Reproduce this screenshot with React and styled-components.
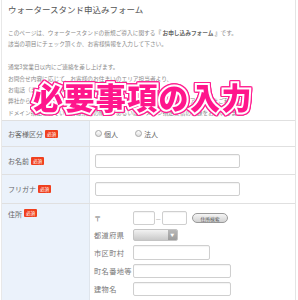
import React from 'react';
import styled, { createGlobalStyle } from 'styled-components';

const GlobalStyle = createGlobalStyle`
  html, body {
    margin: 0;
    padding: 0;
    background: #fff;
  }
  body {
    font-family: "Noto Sans CJK JP", "Noto Sans", sans-serif;
  }
`;

const Page = styled.div`
  position: relative;
  width: 298px;
  height: 300px;
  overflow: hidden;
  background: #fff;
`;

const Frame = styled.div`
  margin-left: 1px;
  width: 293px;
  height: 300px;
  border-left: 1px solid #e8e8e8;
  border-right: 1px solid #e4e4e4;
`;

const Title = styled.h1`
  margin: 0;
  padding: 4px 0 0 6px;
  font-size: 8.5px;
  line-height: 11px;
  font-weight: 400;
  color: #555;
`;

const Intro = styled.div`
  padding: 12px 0 0 6px;
  font-size: 5.7px;
  line-height: 11.4px;
  color: #8a8a8a;
  height: 93px;
  white-space: nowrap;
`;

const Line = styled.p`
  margin: 0;
  min-height: 11.4px;
`;

const Strong = styled.b`
  color: #666;
`;

const Table = styled.div`
  border-top: 1px solid #e0e0e0;
`;

const Row = styled.div`
  display: grid;
  grid-template-columns: 88px 1fr;
  height: ${p => p.$h}px;
  border-bottom: ${p => (p.$last ? 'none' : '1px solid #e0e0e0')};
`;

const Label = styled.div`
  display: flex;
  align-items: ${p => (p.$top ? 'flex-start' : 'center')};
  gap: 2px;
  padding: ${p => (p.$top ? '5px 0 0 6px' : '0 0 0 6px')};
  background: #ebf2fb;
  border-right: 1px solid #dfe5ec;
  font-size: 7px;
  color: #666;
`;

const Badge = styled.span`
  display: inline-flex;
  align-items: center;
  justify-content: center;
  width: 13px;
  height: 8px;
  background: #f0401e;
  color: #fff;
  font-size: 4.6px;
  border-radius: 1px;
`;

const Cell = styled.div`
  display: flex;
  align-items: ${p => (p.$top ? 'flex-start' : 'center')};
  padding: ${p => (p.$top ? '7px 0 0 4px' : '0 0 0 5px')};
`;

const Radios = styled.div`
  display: flex;
  align-items: center;
  gap: 17px;
  font-size: 7px;
  color: #666;
`;

const RadioItem = styled.label`
  display: flex;
  align-items: center;
  gap: 2px;
`;

const Radio = styled.span`
  width: 5px;
  height: 5px;
  border-radius: 50%;
  border: 1px solid #a8a8a8;
  background: linear-gradient(#fff, #ddd);
`;

const Input = styled.div`
  width: ${p => p.$w}px;
  height: ${p => p.$h || 14}px;
  box-sizing: border-box;
  border: 1px solid #cfcfcf;
  border-radius: 2px;
  background: #fff;
  box-shadow: inset 0 1px 1px rgba(0, 0, 0, 0.05);
`;

const Address = styled.div`
  display: grid;
  grid-template-columns: 39px auto;
  row-gap: 4px;
  align-items: center;
  font-size: 7.2px;
  color: #777;
  letter-spacing: 0.4px;
`;

const Postal = styled.div`
  display: flex;
  align-items: center;
`;

const Dash = styled.span`
  width: 7px;
  text-align: center;
  font-size: 6px;
  color: #999;
`;

const SearchButton = styled.span`
  margin-left: 5px;
  width: 36px;
  height: 10px;
  box-sizing: border-box;
  border: 1px solid #9a9a9a;
  border-radius: 5px;
  background: linear-gradient(#f6f6f6, #d2d2d2);
  font-size: 4.8px;
  letter-spacing: 0;
  color: #555;
  display: flex;
  align-items: center;
  justify-content: center;
`;

const Select = styled.div`
  display: flex;
  width: 45px;
  height: 12px;
  border-radius: 2px;
  overflow: hidden;
  background: linear-gradient(#f2f2f2, #c9c9c9);
  border: 1px solid #c4c4c4;
  box-sizing: border-box;
`;

const SelectArrow = styled.span`
  margin-left: auto;
  width: 9px;
  background: linear-gradient(#b8b8b8, #9c9c9c);
  display: flex;
  align-items: center;
  justify-content: center;
  color: #fff;
  font-size: 4px;
`;

const Overlay = styled.div`
  position: absolute;
  left: 33px;
  top: 79px;
  font-size: 30px;
  line-height: 34px;
  font-weight: 900;
  letter-spacing: 1.4px;
  color: #ff168c;
  -webkit-text-stroke: 4px #fff;
  paint-order: stroke fill;
  white-space: nowrap;
  filter: drop-shadow(1px 0 0 #ff1f90) drop-shadow(-1px 0 0 #ff1f90)
    drop-shadow(0 1px 0 #ff1f90) drop-shadow(0 -1px 0 #ff1f90);
`;

const Required = () => <Badge>必須</Badge>;

export default function App() {
  return (
    <Page>
      <GlobalStyle />
      <Frame>
        <Title>ウォータースタンド申込みフォーム</Title>
        <Intro>
          <Line>
            このページは、ウォータースタンドの新規ご導入に関する<Strong>『 お申し込みフォーム 』</Strong>です。
          </Line>
          <Line>該当の項目にチェック頂くか、お客様情報を入力して下さい。</Line>
          <Line />
          <Line>通常3営業日以内にご連絡を差し上げます。</Line>
          <Line>お問合せ内容に応じて、お客様のお住まいのエリア担当者より、</Line>
          <Line>お電話（またはメール）にてご連絡をさせていただきます。</Line>
          <Line>弊社からのメールが届かない場合がございますので、携帯電話のメールアドレスをご利用で、</Line>
          <Line>ドメイン指定されている方は指定の解除、あるいは ドメイン指定受信の登録をお願いします。</Line>
        </Intro>
        <Table>
          <Row $h={25}>
            <Label>
              お客様区分<Required />
            </Label>
            <Cell>
              <Radios>
                <RadioItem>
                  <Radio />個人
                </RadioItem>
                <RadioItem>
                  <Radio />法人
                </RadioItem>
              </Radios>
            </Cell>
          </Row>
          <Row $h={27}>
            <Label>
              お名前<Required />
            </Label>
            <Cell>
              <Input $w={145} />
            </Cell>
          </Row>
          <Row $h={28}>
            <Label>
              フリガナ<Required />
            </Label>
            <Cell>
              <Input $w={145} />
            </Cell>
          </Row>
          <Row $h={100} $last>
            <Label $top>
              住所<Required />
            </Label>
            <Cell $top>
              <Address>
                <span>〒</span>
                <Postal>
                  <Input $w={22} />
                  <Dash>－</Dash>
                  <Input $w={25} />
                  <SearchButton>住所検索</SearchButton>
                </Postal>
                <span>都道府県</span>
                <Select>
                  <SelectArrow>▼</SelectArrow>
                </Select>
                <span>市区町村</span>
                <Input $w={77} $h={15} />
                <span>町名番地等</span>
                <Input $w={98} />
                <span>建物名</span>
                <Input $w={98} />
              </Address>
            </Cell>
          </Row>
        </Table>
      </Frame>
      <Overlay>必要事項の入力</Overlay>
    </Page>
  );
}
